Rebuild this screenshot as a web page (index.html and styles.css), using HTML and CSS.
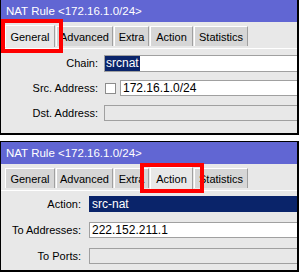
FILE: index.html
```html
<!DOCTYPE html>
<html lang="en">
<head>
  <meta charset="UTF-8" />
  <title>NAT Rule</title>
  <link rel="stylesheet" href="styles.css">
</head>
<body>

  <div class="window first">
    <div class="titlebar">NAT Rule &lt;172.16.1.0/24&gt;</div>
    <div class="tabs">
      <span class="tab t-general active">General</span>
      <span class="tab t-advanced">Advanced</span>
      <span class="tab t-extra">Extra</span>
      <span class="tab t-action">Action</span>
      <span class="tab t-stats">Statistics</span>
    </div>
    <div class="content">
      <div class="row">
        <label>Chain:</label>
        <div class="field"><span class="sel">srcnat</span></div>
      </div>
      <div class="row">
        <label>Src. Address:</label>
        <span class="check"></span>
        <div class="field">172.16.1.0/24</div>
      </div>
      <div class="row">
        <label>Dst. Address:</label>
        <div class="field off"></div>
      </div>
    </div>
    <div class="mark mark-general"></div>
  </div>

  <div class="window second">
    <div class="titlebar">NAT Rule &lt;172.16.1.0/24&gt;</div>
    <div class="tabs">
      <span class="tab t-general">General</span>
      <span class="tab t-advanced">Advanced</span>
      <span class="tab t-extra">Extra</span>
      <span class="tab t-action active">Action</span>
      <span class="tab t-stats">Statistics</span>
    </div>
    <div class="content">
      <div class="row">
        <label>Action:</label>
        <div class="field navy">src-nat</div>
      </div>
      <div class="row">
        <label>To Addresses:</label>
        <div class="field">222.152.211.1</div>
      </div>
      <div class="row">
        <label>To Ports:</label>
        <div class="field off"></div>
      </div>
    </div>
    <div class="mark mark-action"></div>
  </div>

</body>
</html>
```

FILE: styles.css
```css
* { margin: 0; padding: 0; box-sizing: border-box; }
body { font-family: 'Liberation Sans', Arial, sans-serif; font-size: 11px; background: #fff; color: #000; width: 299px; }

.window {
  position: relative;
  width: 299px;
  background: #e8e8e8;
  border: 2px solid #000;
  border-left-width: 1px;
  overflow: hidden;
  display: flex;
  flex-direction: column;
}
.first { height: 135px; border-top: none; }
.second { height: 131px; margin-top: 6px; border-top-width: 1px; }

.titlebar {
  height: 22px;
  background: #6166d3;
  color: #fff;
  font-size: 11.5px;
  padding: 5px 0 0 5px;
  white-space: nowrap;
}

.tabs {
  height: 27px;
  display: flex;
  align-items: flex-end;
  padding: 0 0 2px 4px;
  gap: 1px;
  border-bottom: 1px solid #fff;
}

.tab {
  height: 20px;
  padding-top: 4px;
  text-align: center;
  background: #d6d6d6;
  border-top: 1px solid #fff;
  border-left: 1px solid #fff;
  border-right: 1px solid #a0a0a0;
  white-space: nowrap;
}
.tab.active { background: #e8e8e8; height: 22px; margin-bottom: -1px; padding-top: 5px; }
.t-general { width: 50px; }
.t-advanced { width: 57px; }
.t-extra { width: 35px; }
.t-action { width: 43px; }
.t-stats { width: 54px; }

.content {
  display: flex;
  flex-direction: column;
}
.first .content { padding-top: 4px; gap: 5px; }
.second .content { padding-top: 3px; gap: 6px; }

.row {
  display: flex;
  align-items: center;
  height: 20px;
}
label { text-align: right; flex-shrink: 0; }
.first label { width: 97px; margin-right: 6px; }
.second label { width: 80px; margin-right: 8px; }

.field {
  flex: 1;
  min-width: 220px;
  height: 16px;
  background: #fff;
  border-top: 1px solid #a0a0a0;
  border-left: 1px solid #a0a0a0;
  border-bottom: 1px solid #a0a0a0;
  font-size: 12px;
  line-height: 14px;
  padding: 0 2px;
  white-space: nowrap;
}
.first .row:first-child .field { padding-left: 0; height: 17px; }
.field.off { background: #e8e8e8; }
.field.navy { background: #0a246a; color: #fff; border-color: #0a246a; }
.sel { background: #0a246a; color: #fff; padding: 0 1px; display: inline-block; height: 15px; }

.check {
  width: 11px;
  height: 11px;
  margin: 0 4px 0 1px;
  background: #fff;
  border: 1px solid #8c8c8c;
  flex-shrink: 0;
}

/* red annotation boxes */
.mark { position: absolute; border: 4px solid #ff0000; }
.mark-general { left: 0; top: 19px; width: 62px; height: 34px; }
.mark-action { left: 139px; top: 21px; width: 64px; height: 30px; }
```
